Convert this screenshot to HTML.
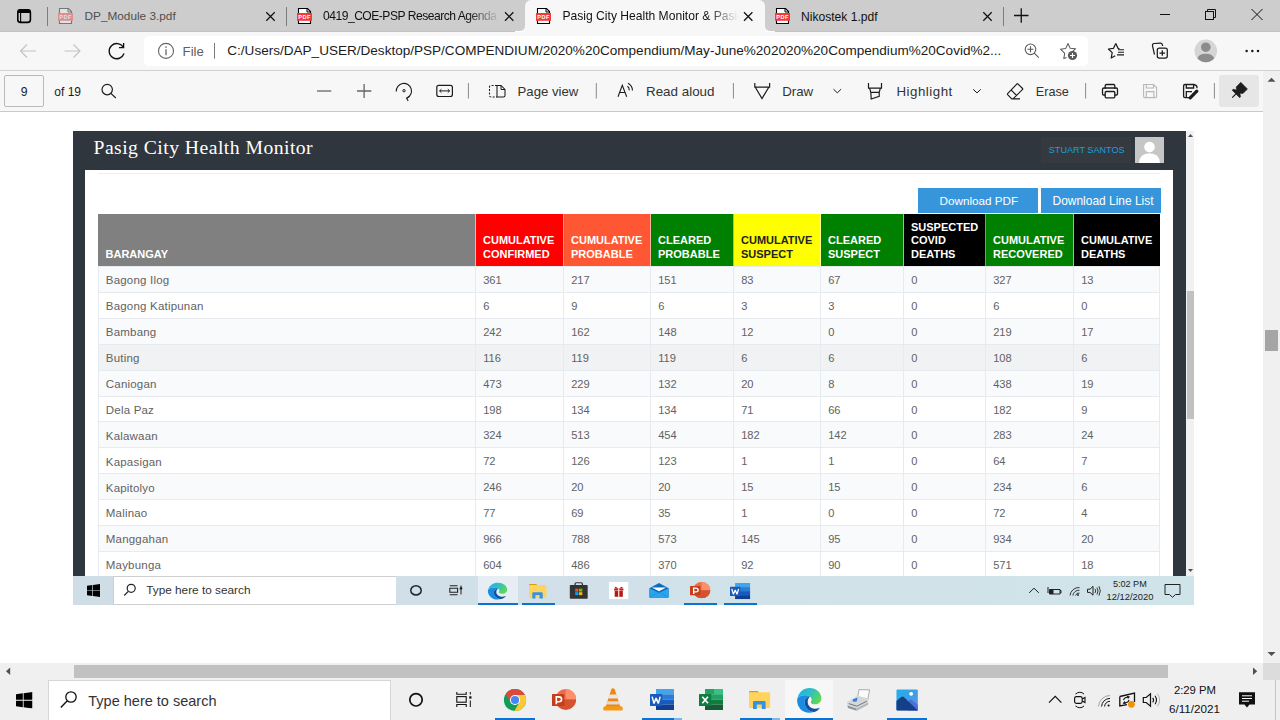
<!DOCTYPE html>
<html><head><meta charset="utf-8">
<style>
*{box-sizing:border-box;margin:0;padding:0}
html,body{width:1280px;height:720px;overflow:hidden;background:#fff;font-family:"Liberation Sans",sans-serif;}
body{position:relative}
.a{position:absolute}
.t{position:absolute;white-space:nowrap;line-height:1}
svg{position:absolute;overflow:visible}
#tabbar{left:0;top:0;width:1280px;height:31px;background:#cdcdcd}
#toolbar{left:0;top:32px;width:1280px;height:39px;background:#f7f7f7;border-bottom:1px solid #d2d2d2}
#pdfbar{left:0;top:71px;width:1263px;height:41px;background:#f7f7f7;border-bottom:1px solid #c9c9c9}
#vscroll{left:1263px;top:71px;width:17px;height:592px;background:#f0f0f0}
#hscroll{left:0;top:663px;width:1263px;height:17px;background:#f0f0f0}
#corner{left:1263px;top:663px;width:17px;height:17px;background:#dcdcdc}
#taskbar{left:0;top:680px;width:1280px;height:40px;background:#efefef}
</style></head><body>
<svg width="0" height="0" style="position:absolute;left:0;top:0">
<defs>
 <linearGradient id="edg1" x1="0" y1="0" x2="1" y2="0.6"><stop offset="0" stop-color="#22aef0"/><stop offset="0.5" stop-color="#2ebfc4"/><stop offset="1" stop-color="#5ed855"/></linearGradient>
 <linearGradient id="edg2" x1="0" y1="0" x2="0.6" y2="1"><stop offset="0" stop-color="#1d84d8"/><stop offset="1" stop-color="#0b4ea2"/></linearGradient>
 <linearGradient id="phg" x1="0" y1="0" x2="1" y2="1"><stop offset="0" stop-color="#24b0ec"/><stop offset="0.5" stop-color="#3aa0e6"/><stop offset="1" stop-color="#7d86e2"/></linearGradient>
 <symbol id="i-edge" viewBox="0 0 24 24">
  <path d="M1.3 10.5C2.5 4.5 7 1 12.3 1C18.5 1 23 5.2 23 10.2C23 13.8 20.3 15.8 17.2 15.8C14.8 15.8 13.5 14.8 13.5 13.8C13.5 13.2 14.2 12.6 14.2 11.5C14.2 9.2 11.9 7.4 8.6 7.4C5 7.4 2 8.8 1.3 10.5Z" fill="url(#edg1)"/>
  <path d="M1.3 10.5C2 8.8 5 7.4 8.6 7.4C10.6 7.4 12 8 12.8 8.6C10 8.8 7.8 11.2 7.8 14.2C7.8 18.6 11.8 22.6 16.4 22.8C15 23.2 13.6 23.4 12 23.4C5.8 23.4 1 18.4 1 12C1 11.5 1.1 11 1.3 10.5Z" fill="#1a8be0"/>
  <path d="M12.8 8.6C10 8.8 7.8 11.2 7.8 14.2C7.8 18.6 11.8 22.6 16.4 22.8C18.8 22.2 20.6 20.5 21.6 18.8C19.5 19.8 17.5 20 15.8 19.6C12.8 18.9 10.6 16.3 10.6 13.6C10.6 11.3 11.6 9.6 12.8 8.6Z" fill="#0c51a6"/>
 </symbol>
 <symbol id="i-explorer" viewBox="0 0 21.3 18">
  <path d="M0 1Q0 0 1 0H8.8L10 1.5L8.8 3H0Z" fill="#dc9c0a"/>
  <rect x="0" y="1.3" width="21.3" height="15.6" rx="0.8" fill="#ffd35e"/>
  <path d="M4 11.3Q4 10 5.3 10H15.3Q16.6 10 16.6 11.3V18H12.8V13.4H7.8V18H4Z" fill="#3592e2"/>
 </symbol>
 <symbol id="i-ppt" viewBox="0 0 24 21">
  <circle cx="13.7" cy="10.4" r="10.4" fill="#ed6c47"/>
  <path d="M13.7 0A10.4 10.4 0 0 1 24.1 10.4H13.7Z" fill="#ff8f6b"/>
  <path d="M3.3 10.4A10.4 10.4 0 0 0 24.1 10.4Z" fill="#d35230"/>
  <rect x="0" y="5" width="12.25" height="12" rx="0.6" fill="#c43e1c"/>
  <path d="M4.3 15.2V7.9H7Q9.6 7.9 9.6 10.3Q9.6 12.7 7 12.7H4.3" fill="none" stroke="#fff" stroke-width="1.6"/>
 </symbol>
 <symbol id="i-word" viewBox="0 0 24 21">
  <rect x="6" y="0" width="18" height="5.3" fill="#41a5ee"/>
  <rect x="6" y="5.3" width="18" height="5.2" fill="#2b7cd3"/>
  <rect x="6" y="10.5" width="18" height="5.2" fill="#185abd"/>
  <rect x="6" y="15.7" width="18" height="5.3" fill="#103f91"/>
  <rect x="0" y="5" width="12.25" height="12" rx="0.6" fill="#185abd"/>
  <path d="M2.1 7.6L4 14.6L6.1 9L8.3 14.6L10.2 7.6" fill="none" stroke="#fff" stroke-width="1.5" stroke-linejoin="bevel"/>
 </symbol>
 <symbol id="i-excel" viewBox="0 0 24 21">
  <rect x="6" y="0" width="18" height="5.3" fill="#21a366"/>
  <rect x="15" y="0" width="9" height="5.3" fill="#33c481"/>
  <rect x="6" y="5.3" width="18" height="5.2" fill="#21a366"/>
  <rect x="6" y="10.5" width="18" height="5.2" fill="#107c41"/>
  <rect x="6" y="15.7" width="18" height="5.3" fill="#185c37"/>
  <rect x="0" y="5" width="12.25" height="12" rx="0.6" fill="#107c41"/>
  <path d="M3.3 7.8L9 14.3M9 7.8L3.3 14.3" fill="none" stroke="#fff" stroke-width="1.7"/>
 </symbol>
 <symbol id="i-chrome" viewBox="0 0 24 24">
  <circle cx="12" cy="12" r="11.1" fill="#109d59"/>
  <path d="M7.67 14.50L2.71 5.92A11.1 11.1 0 0 1 21.91 7.00L12.00 7.00L12 12Z" fill="#dc4a3c"/>
  <path d="M12.00 7.00L21.91 7.00A11.1 11.1 0 0 1 11.37 23.08L16.33 14.50L12 12Z" fill="#fcc934"/>
  <circle cx="12" cy="12" r="5.1" fill="#fff"/>
  <circle cx="12" cy="12" r="4.1" fill="#4787f3"/>
 </symbol>
 <symbol id="i-vlc" viewBox="0 0 20 23">
  <path d="M8.4 1Q10 -0.3 11.6 1L17.4 19H2.6Z" fill="#f08712"/>
  <path d="M6.5 6.6H13.5L14.8 10.6H5.2Z" fill="#e8e8e8"/>
  <path d="M4.3 13.3H15.7L16.7 16.6H3.3Z" fill="#dcdcdc"/>
  <path d="M0.3 20Q0.3 18.3 2 18.3H18Q19.7 18.3 19.7 20V21.3Q19.7 22.6 18.4 22.6H1.6Q0.3 22.6 0.3 21.3Z" fill="#f49a14"/>
 </symbol>
 <symbol id="i-photos" viewBox="0 0 24 24">
  <rect x="0.5" y="0.5" width="23" height="23" rx="1.2" fill="url(#phg)"/>
  <path d="M11 15.5L15.8 11.2L23.5 17.2V23.5H13Z" fill="#4d6fd6"/>
  <path d="M0.5 13.2L5.6 8.7Q7 7.6 8.4 8.7L23.5 23.5H1.7Q0.5 23.5 0.5 22.3Z" fill="#153f86"/>
  <circle cx="16.3" cy="5.3" r="2.1" fill="#fff"/>
 </symbol>
 <symbol id="i-fax" viewBox="0 0 24 22">
  <path d="M13 0.6L23.6 0.9L21.6 11.5L11.2 11Z" fill="#fbfbfb" stroke="#8c8c8c" stroke-width="0.7"/>
  <path d="M1 13.2L11.5 6.8L21.8 9.2L22.2 13.2L10.4 19.6L1.4 16.6Z" fill="#d3d7db"/>
  <path d="M1.4 16.6L10.4 19.6L10.8 21.8L2 18.9Z" fill="#8d9399"/>
  <path d="M10.4 19.6L22.2 13.2L22.2 15.8L10.8 21.8Z" fill="#b3b8be"/>
  <path d="M6.5 10.6L11.6 8.6L10.6 12.4L7.2 12.8Z" fill="#2f7fd8"/>
  <path d="M2.8 14.6L10.8 17.2L20.8 12.2" fill="none" stroke="#737980" stroke-width="1"/>
 </symbol>
 <symbol id="i-store" viewBox="0 0 24 24">
  <path d="M7.5 4V2.6Q7.5 1 9 1H15Q16.5 1 16.5 2.6V4" fill="none" stroke="#333" stroke-width="1.6"/>
  <rect x="1" y="4.2" width="22" height="18.8" rx="1" fill="#333"/>
  <rect x="7.6" y="9.2" width="4" height="4" fill="#f25022"/><rect x="12.4" y="9.2" width="4" height="4" fill="#7fba00"/>
  <rect x="7.6" y="14" width="4" height="4" fill="#00a4ef"/><rect x="12.4" y="14" width="4" height="4" fill="#ffb900"/>
 </symbol>
 <symbol id="i-gift" viewBox="0 0 24 24">
  <rect x="0" y="0" width="24" height="24" fill="#fff"/>
  <rect x="6.3" y="9" width="11.4" height="3" fill="#c21b1b"/>
  <rect x="7" y="12.6" width="10" height="8" fill="#b51616"/>
  <path d="M11.2 9Q8 5 7 7.3Q7 9 11.2 9ZM12.8 9Q16 5 17 7.3Q17 9 12.8 9Z" fill="#c21b1b"/>
  <rect x="11.3" y="9" width="1.4" height="11.6" fill="#fff"/>
 </symbol>
 <symbol id="i-mail" viewBox="0 0 24 24">
  <path d="M0.5 9L12 1.5L23.5 9V21.5Q23.5 23 22 23H2Q0.5 23 0.5 21.5Z" fill="#0f6cbd"/>
  <path d="M3.5 8H20.5L12 13.5Z" fill="#fff"/>
  <path d="M0.5 9L12 16L23.5 9V21.5Q23.5 23 22 23H2Q0.5 23 0.5 21.5Z" fill="#2aa4ea"/>
  <path d="M0.5 22L12 15L23.5 22" fill="none" stroke="#1b8fd8" stroke-width="0.8"/>
 </symbol>
 <symbol id="i-win" viewBox="0 0 16 16">
  <path d="M0 2.2L6.6 1.3V7.6H0ZM7.4 1.2L16 0V7.6H7.4ZM0 8.4H6.6V14.7L0 13.8ZM7.4 8.4H16V16L7.4 14.8Z" fill="#000"/>
 </symbol>
</defs>
</svg>
<div id="tabbar" class="a"></div>
<div class="a" style="left:0;top:31px;width:515px;height:1px;background:#c2c2c2"></div><div class="a" style="left:775px;top:31px;width:505px;height:1px;background:#c2c2c2"></div>
<!-- active tab -->
<div class="a" style="left:521px;top:0;width:248px;height:31px;background:#cdcdcd"></div>
<div class="a" style="left:525px;top:0;width:240px;height:32px;background:#f7f7f7;border-radius:6px 6px 0 0"></div>
<div class="a" style="left:517px;top:23px;width:8px;height:8px;background:#f7f7f7"></div>
<div class="a" style="left:513px;top:19px;width:12px;height:12px;background:#cdcdcd;border-radius:0 0 5px 0"></div>
<div class="a" style="left:765px;top:23px;width:8px;height:8px;background:#f7f7f7"></div>
<div class="a" style="left:765px;top:19px;width:12px;height:12px;background:#cdcdcd;border-radius:0 0 0 5px"></div>
<svg width="1280" height="31" style="left:0;top:0">
 <defs>
  <g id="pdfi">
   <path d="M1.5 0.5H10.5L13.5 3.5V15.5H1.5Z" fill="#fff" stroke="#000" stroke-width="1.1"/>
   <path d="M10 0.8V4H13.2" fill="none" stroke="#000" stroke-width="1"/>
   <rect x="0" y="5" width="15" height="7.8" fill="#f33a3a"/>
   <text x="7.5" y="11.2" font-family="Liberation Sans" font-weight="bold" font-size="5.6" fill="#fff" text-anchor="middle" letter-spacing="0.5">PDF</text>
  </g>
  <g id="xcl"><path d="M0 0L8.4 8.4M8.4 0L0 8.4" stroke="#111" stroke-width="1.25" fill="none"/></g>
 </defs>
 <!-- tab actions -->
 <rect x="17.8" y="9.8" width="12.6" height="12.6" rx="2.6" fill="none" stroke="#000" stroke-width="1.6"/>
 <rect x="17.8" y="9.8" width="12.6" height="3.2" rx="1.2" fill="#000"/>
 <path d="M20.6 12.5V22" stroke="#000" stroke-width="1.1"/>
 <path d="M47.5 7V26" stroke="#7c7c7c" stroke-width="1"/>
 <use href="#pdfi" x="58" y="8" opacity="0.42"/>
 <use href="#xcl" x="266.3" y="12.3"/>
 <path d="M286.5 7V26" stroke="#7c7c7c" stroke-width="1"/>
 <use href="#pdfi" x="297" y="8"/>
 <use href="#xcl" x="505" y="12.3"/>
 <use href="#pdfi" x="536" y="8"/>
 <use href="#xcl" x="744" y="12.3"/>
 <use href="#pdfi" x="775" y="8"/>
 <use href="#xcl" x="983.3" y="12.3"/>
 <path d="M1003.5 7V26" stroke="#7c7c7c" stroke-width="1"/>
 <path d="M1014 15.5H1028.5M1021.25 8.3V22.8" stroke="#111" stroke-width="1.3"/>
 <path d="M1160 14.5H1170" stroke="#111" stroke-width="1"/>
 <rect x="1205.5" y="11.5" width="8" height="8" fill="none" stroke="#111" stroke-width="1"/>
 <path d="M1207.5 11.5V9.5H1215.5V17.5H1213.5" fill="none" stroke="#111" stroke-width="1"/>
 <path d="M1251.5 9L1262.5 20M1262.5 9L1251.5 20" stroke="#111" stroke-width="1"/>
</svg>
<div class="t" style="left:84.5px;top:10.6px;font-size:11.8px;color:#4f4f4f">DP_Module 3.pdf</div>
<div class="t" style="left:323px;top:8.1px;line-height:16px;font-size:12.1px;letter-spacing:-0.5px;color:#111;width:177px;overflow:hidden;-webkit-mask-image:linear-gradient(90deg,#000 82%,transparent 100%)">0419_COE-PSP Research Agenda 2021</div>
<div class="t" style="left:562.5px;top:8.1px;line-height:16px;font-size:12.1px;color:#111;width:176px;overflow:hidden;-webkit-mask-image:linear-gradient(90deg,#000 82%,transparent 100%)">Pasig City Health Monitor &amp; Pasig City</div>
<div class="t" style="left:801px;top:10.6px;font-size:12.1px;color:#111">Nikostek 1.pdf</div>
<div id="toolbar" class="a"></div>
<div class="a" style="left:144px;top:36px;width:944px;height:30px;background:#fff;border-radius:5px"></div>
<svg width="1280" height="40" style="left:0;top:31px">
 <g transform="translate(0,-31)">
 <path d="M20.5 51H36M27 44.5L20.5 51L27 57.5" fill="none" stroke="#c4c4c4" stroke-width="1.2"/>
 <path d="M80 51H64.5M73.5 44.5L80 51L73.5 57.5" fill="none" stroke="#c4c4c4" stroke-width="1.2"/>
 <path d="M123.3 47.2A7.6 7.6 0 1 0 124 53.5" fill="none" stroke="#111" stroke-width="1.35"/>
 <path d="M123.6 43V47.6H119" fill="none" stroke="#111" stroke-width="1.35"/>
 <circle cx="166" cy="50.9" r="7.5" fill="none" stroke="#666" stroke-width="1.1"/>
 <path d="M166 49.3V55.2" stroke="#666" stroke-width="1.3"/><circle cx="166" cy="47" r="0.85" fill="#666"/>
 <path d="M214.5 43V58.7" stroke="#7a7a7a" stroke-width="1"/>
 <circle cx="1030.5" cy="49.3" r="5.3" fill="none" stroke="#5a5a5a" stroke-width="1.1"/>
 <path d="M1027.5 49.3H1033.5M1030.5 46.3V52.3M1034.3 53.1L1038.8 57.7" stroke="#5a5a5a" stroke-width="1.1"/>
 <path d="M1068 43.5L1070.2 48.3L1075.5 48.8L1071.5 52.3" fill="none" stroke="#5a5a5a" stroke-width="1.05" stroke-linejoin="round"/>
 <path d="M1066.5 57.5L1063.8 58.5L1064.7 53.3L1060.5 49.2L1065.8 48.4L1068 43.5" fill="none" stroke="#5a5a5a" stroke-width="1.05" stroke-linejoin="round"/>
 <circle cx="1072.5" cy="55.5" r="4.6" fill="#5a5a5a"/>
 <path d="M1072.5 53V58M1070 55.5H1075" stroke="#fff" stroke-width="1.1"/>
 <path d="M1116 43.5L1118.3 48.4L1123.5 49L1119.6 52.5L1120.6 57.7" fill="none" stroke="#1a1a1a" stroke-width="0"/>
 <path d="M1115.8 43.4L1113.5 48.3L1108.4 49L1112.2 52.6L1111.2 58L1115.2 55.8" fill="none" stroke="#1a1a1a" stroke-width="1.2" stroke-linejoin="round"/>
 <path d="M1115.8 43.4L1118 48.3L1119.5 48.5" fill="none" stroke="#1a1a1a" stroke-width="1.2" stroke-linejoin="round"/>
 <path d="M1118 49.7H1124M1118 52.3H1124M1117 54.9H1124" stroke="#1a1a1a" stroke-width="1.1"/>
 <path d="M1154.5 54.5L1152.5 45.8Q1152.2 43.8 1154.2 43.5L1160.2 43.1Q1162 43 1162.4 44.8L1162.6 46" fill="none" stroke="#1a1a1a" stroke-width="1.2"/>
 <rect x="1157.3" y="48" width="10" height="10" rx="2" fill="#f7f7f7" stroke="#1a1a1a" stroke-width="1.25"/>
 <path d="M1162.3 50.2V55.8M1159.5 53H1165.1" stroke="#1a1a1a" stroke-width="1.25"/>
 <circle cx="1205.8" cy="50.9" r="11.3" fill="#d5d5d5"/>
 <circle cx="1205.8" cy="47.2" r="4.8" fill="#8c8c8c"/>
 <path d="M1197.5 58.5Q1198.5 53.8 1205.8 53.8Q1213 53.8 1214.2 58.5A11.3 11.3 0 0 1 1197.5 58.5Z" fill="#8c8c8c"/>
 <circle cx="1246.6" cy="50.9" r="1.25" fill="#1a1a1a"/><circle cx="1252.3" cy="50.9" r="1.25" fill="#1a1a1a"/><circle cx="1258" cy="50.9" r="1.25" fill="#1a1a1a"/>
 </g>
</svg>
<div class="t" style="left:182.6px;top:44.5px;font-size:13.2px;color:#5f5f5f">File</div>
<div class="t" style="left:227.3px;top:44.4px;font-size:13.55px;color:#1c1c1c">C:/Users/DAP_USER/Desktop/PSP/COMPENDIUM/2020%20Compendium/May-June%202020%20Compendium%20Covid%2...</div>

<div id="pdfbar" class="a"></div>
<div class="a" style="left:4px;top:75px;width:40px;height:32px;border:1px solid #b9b9b9;border-radius:2px;background:#f7f7f7"></div>
<div class="a" style="left:1219px;top:75px;width:40px;height:32px;background:#e6e6e6;border-radius:3px"></div>
<svg width="1263" height="40" style="left:0;top:71px">
 <g transform="translate(0,-71)" fill="none" stroke="#1c1c1c" stroke-width="1.2">
 <circle cx="107.2" cy="89.6" r="5.2"/><path d="M110.9 93.4L115.8 98"/>
 <path d="M317 91H331.3" stroke="#666" stroke-width="1.3"/>
 <path d="M357 91H371.3M364.1 84V98" stroke="#666" stroke-width="1.3"/>
 <path d="M396.3 91.5A7.6 7.6 0 1 1 406.8 98" stroke-width="1.1"/>
 <path d="M409.8 96.3L406.6 98.2L408.2 101" stroke-width="1.1"/>
 <circle cx="404" cy="90.7" r="1.2" stroke-width="1"/>
 <rect x="436.8" y="85.3" width="15.6" height="11.2" rx="2" stroke-width="1.2"/>
 <path d="M439.6 90.9H449.6M441.4 89.2L439.6 90.9L441.4 92.6M447.8 89.2L449.6 90.9L447.8 92.6" stroke-width="1"/>
 <path d="M468.4 83V98.5" stroke="#8a8a8a" stroke-width="1"/>
 <path d="M497 85.5H491Q489.5 85.5 489.5 87V95.5Q489.5 97 491 97H497" stroke-dasharray="2 1.4" stroke-width="1.05"/>
 <path d="M497 85.5H501L505 89.5V95.5Q505 97 503.5 97H497Z" stroke-width="1.05"/>
 <path d="M501 85.5V89.5H505" stroke-width="1"/>
 <path d="M596.3 83V98.5" stroke="#8a8a8a" stroke-width="1"/>
 <path d="M618 96.8L622.3 85.2L626.7 96.8M619.6 92.5H625" stroke-width="1.1"/>
 <path d="M627.5 86.3Q629.5 87.8 629.2 90.4M628 83.2Q632.4 85.5 632.5 90.6" stroke-width="1.1"/>
 <path d="M733.4 83V98.5" stroke="#8a8a8a" stroke-width="1"/>
 <path d="M754.8 83V87.2H769.6V83M755.3 87.2L762 98.5L768.8 87.2" stroke-width="1.2"/>
 <path d="M833.5 89.2L837.3 92.8L841.1 89.2" stroke-width="1"/>
 <path d="M868.5 83V88.2H881.5V83M869.6 88.2L870.8 92.3H879.2L880.4 88.2M870.8 92.3L871.2 99L879.2 96.3V92.3" stroke-width="1.2"/>
 <path d="M973.2 89.3L977 92.9L980.8 89.3" stroke-width="1"/>
 <path d="M1007.6 93.6L1017 83.8Q1017.4 83.4 1017.8 83.8L1022.6 88.5Q1023 89 1022.6 89.4L1013 99H1011.8L1007.6 94.6Q1007.2 94.1 1007.6 93.6ZM1011 89.9L1016.6 95.5M1012.2 98.9H1020" stroke-width="1.15"/>
 <path d="M1085.6 83V98.5" stroke="#8a8a8a" stroke-width="1"/>
 <path d="M1105.2 89V85.8Q1105.2 84.5 1106.5 84.5H1113.6Q1114.8 84.5 1114.8 85.8V89M1105.2 95H1103.6Q1102.5 95 1102.5 93.8V89.2Q1102.5 88 1104 88H1116.2Q1117.5 88 1117.5 89.4V93.8Q1117.5 95 1116.4 95H1114.8" stroke-width="1.3"/>
 <rect x="1105.2" y="91.5" width="9.6" height="6.3" rx="1" stroke-width="1.3"/>
 <path d="M1143.6 84.5H1153.5L1156.6 87.6V96.3Q1156.6 97.6 1155.3 97.6H1144.9Q1143.6 97.6 1143.6 96.3ZM1146.3 84.5V88H1153.5V84.5M1146.3 97.6V91.6H1153.9V97.6" stroke="#b8b8b8" stroke-width="1.1"/>
 <path d="M1189.5 97.6H1185Q1183.6 97.6 1183.6 96.3V85.8Q1183.6 84.5 1185 84.5H1194Q1197.3 85.3 1197 88.2M1186.3 84.5V88H1193.6V84.5M1186.3 97.6V91.6H1192" stroke-width="1.3"/>
 <path d="M1190.2 97.8L1196.8 91.2" stroke-width="3.2" stroke-linecap="round"/>
 <path d="M1214.4 83V98.5" stroke="#8a8a8a" stroke-width="1"/>
 </g>
 <g transform="translate(0,-71)">
 <path d="M1232.15 90.15 L1233.07 89.23 L1236.47 89.94 L1236.25 86.90 L1240.78 82.37 L1247.43 89.02 L1242.90 93.55 L1239.86 93.33 L1240.57 96.73 L1239.65 97.65Z" fill="#1e1e1e" stroke="#1e1e1e" stroke-width="0.6" stroke-linejoin="round"/>
 <path d="M1236.04 93.76L1232.22 97.58" stroke="#1e1e1e" stroke-width="1.1"/>
 </g>
</svg>
<div class="t" style="left:20.8px;top:85.8px;font-size:12.2px;color:#1c1c1c">9</div>
<div class="t" style="left:54.3px;top:85.7px;font-size:12px;color:#1c1c1c">of 19</div>
<div class="t" style="left:517.5px;top:84.5px;font-size:13.2px;color:#333">Page view</div>
<div class="t" style="left:646px;top:84.5px;font-size:13.4px;color:#333">Read aloud</div>
<div class="t" style="left:782.2px;top:84.7px;font-size:13.3px;color:#333">Draw</div>
<div class="t" style="left:896.5px;top:84.5px;font-size:13.3px;letter-spacing:0.5px;color:#333">Highlight</div>
<div class="t" style="left:1035.7px;top:85.8px;font-size:12.7px;color:#333">Erase</div>
<div id="vscroll" class="a"></div>
<svg width="17" height="592" style="left:1263px;top:71px"><path d="M4.5 10.8L8.5 6.8L12.5 10.8Z" fill="#505050"/><path d="M4.5 581L8.5 585L12.5 581Z" fill="#505050"/></svg>
<div class="a" style="left:1265px;top:330px;width:13px;height:21px;background:#a5a5a5"></div>
<div id="hscroll" class="a"></div>
<div class="a" style="left:74px;top:665px;width:1094px;height:13px;background:#c1c1c1"></div>
<svg width="1263" height="17" style="left:0;top:663px"><path d="M10.2 4.6L6 8.3L10.2 12Z" fill="#505050"/><path d="M1253 4.6L1257.2 8.3L1253 12Z" fill="#505050"/></svg>
<div id="corner" class="a"></div>
<!-- screenshot -->
<div class="a" style="left:73px;top:131px;width:1113px;height:445px;background:#2f363d"></div>
<div class="a" style="left:1186px;top:131px;width:8px;height:445px;background:#f1f1f1"></div>
<div class="a" style="left:1187px;top:291px;width:7px;height:128px;background:#c1c1c1"></div>
<svg width="8" height="445" style="left:1186px;top:131px"><path d="M2 6L4.5 3L7 6Z" fill="#505050"/><path d="M2 438L4.5 441L7 438Z" fill="#505050"/></svg>
<div class="t" style="left:93.5px;top:137.6px;font-size:19.7px;font-family:'Liberation Serif',serif;color:#fff;letter-spacing:0.45px">Pasig City Health Monitor</div>
<div class="a" style="left:1041px;top:137px;width:90px;height:26px;background:#353a41"></div>
<div class="t" style="left:1048.8px;top:146px;font-size:9.1px;color:#1a9fdc">STUART SANTOS</div>
<div class="a" style="left:1135px;top:137px;width:29px;height:26px;background:#c6c6c6;overflow:hidden">
 <svg width="29" height="25" style="left:0;top:0"><circle cx="14.5" cy="10" r="5.3" fill="#fff"/><path d="M4 26Q4.5 16.5 14.5 16.3Q24.5 16.5 25 26Z" fill="#fff"/></svg>
</div>
<div class="a" style="left:85px;top:170px;width:1088px;height:406px;background:#fff"></div>
<div class="a" style="left:98px;top:173px;width:1062px;height:1px;background:#eeeeee"></div>
<div class="a" style="left:918px;top:188px;width:120px;height:25px;background:#3796db"></div>
<div class="a" style="left:1041px;top:188px;width:120px;height:25px;background:#3796db"></div>
<div class="t" style="left:939.5px;top:195.4px;font-size:11.7px;color:#fff">Download PDF</div>
<div class="t" style="left:1052.6px;top:196.2px;font-size:11.95px;color:#fff">Download Line List</div>
<div class="a" style="left:98px;top:214px;width:378px;height:52px;background:#808080"></div>
<div class="a" style="left:105.5px;top:247.94px;font-size:11px;line-height:13.7px;font-weight:bold;color:#fff;white-space:nowrap">BARANGAY</div>
<div class="a" style="left:476px;top:214px;width:88px;height:52px;background:#ff0000"></div>
<div class="a" style="left:483.0px;top:234.24px;font-size:11px;line-height:13.7px;font-weight:bold;color:#fff;white-space:nowrap">CUMULATIVE<br>CONFIRMED</div>
<div class="a" style="left:564px;top:214px;width:87px;height:52px;background:#ff5733"></div>
<div class="a" style="left:571.0px;top:234.24px;font-size:11px;line-height:13.7px;font-weight:bold;color:#fff;white-space:nowrap">CUMULATIVE<br>PROBABLE</div>
<div class="a" style="left:651px;top:214px;width:83px;height:52px;background:#008000"></div>
<div class="a" style="left:658.0px;top:234.24px;font-size:11px;line-height:13.7px;font-weight:bold;color:#fff;white-space:nowrap">CLEARED<br>PROBABLE</div>
<div class="a" style="left:734px;top:214px;width:87px;height:52px;background:#ffff00"></div>
<div class="a" style="left:741.0px;top:234.24px;font-size:11px;line-height:13.7px;font-weight:bold;color:#222;white-space:nowrap">CUMULATIVE<br>SUSPECT</div>
<div class="a" style="left:821px;top:214px;width:83px;height:52px;background:#008000"></div>
<div class="a" style="left:828.0px;top:234.24px;font-size:11px;line-height:13.7px;font-weight:bold;color:#fff;white-space:nowrap">CLEARED<br>SUSPECT</div>
<div class="a" style="left:904px;top:214px;width:82px;height:52px;background:#000000"></div>
<div class="a" style="left:911.0px;top:220.54px;font-size:11px;line-height:13.7px;font-weight:bold;color:#fff;white-space:nowrap">SUSPECTED<br>COVID<br>DEATHS</div>
<div class="a" style="left:986px;top:214px;width:88px;height:52px;background:#008000"></div>
<div class="a" style="left:993.0px;top:234.24px;font-size:11px;line-height:13.7px;font-weight:bold;color:#fff;white-space:nowrap">CUMULATIVE<br>RECOVERED</div>
<div class="a" style="left:1074px;top:214px;width:86px;height:52px;background:#000000"></div>
<div class="a" style="left:1081.0px;top:234.24px;font-size:11px;line-height:13.7px;font-weight:bold;color:#fff;white-space:nowrap">CUMULATIVE<br>DEATHS</div>
<div class="a" style="left:475px;top:214px;width:1px;height:52px;background:rgba(255,255,255,0.55)"></div>
<div class="a" style="left:563px;top:214px;width:1px;height:52px;background:rgba(255,255,255,0.55)"></div>
<div class="a" style="left:650px;top:214px;width:1px;height:52px;background:rgba(255,255,255,0.55)"></div>
<div class="a" style="left:733px;top:214px;width:1px;height:52px;background:rgba(255,255,255,0.55)"></div>
<div class="a" style="left:820px;top:214px;width:1px;height:52px;background:rgba(255,255,255,0.55)"></div>
<div class="a" style="left:903px;top:214px;width:1px;height:52px;background:rgba(255,255,255,0.55)"></div>
<div class="a" style="left:985px;top:214px;width:1px;height:52px;background:rgba(255,255,255,0.55)"></div>
<div class="a" style="left:1073px;top:214px;width:1px;height:52px;background:rgba(255,255,255,0.55)"></div>
<div class="a" style="left:98px;top:266.0px;width:1062px;height:26px;background:#f9fafc;border-top:1px solid #e7eaee"></div>
<div class="t" style="left:105.8px;top:275.37px;font-size:11.5px;letter-spacing:0.2px;color:#626262">Bagong Ilog</div>
<div class="t" style="left:483.2px;top:275.00px;font-size:11.1px;color:#626262">361</div>
<div class="t" style="left:571.2px;top:275.00px;font-size:11.1px;color:#626262">217</div>
<div class="t" style="left:658.2px;top:275.00px;font-size:11.1px;color:#626262">151</div>
<div class="t" style="left:741.2px;top:275.00px;font-size:11.1px;color:#626262">83</div>
<div class="t" style="left:828.2px;top:275.00px;font-size:11.1px;color:#626262">67</div>
<div class="t" style="left:911.2px;top:275.00px;font-size:11.1px;color:#626262">0</div>
<div class="t" style="left:993.2px;top:275.00px;font-size:11.1px;color:#626262">327</div>
<div class="t" style="left:1081.2px;top:275.00px;font-size:11.1px;color:#626262">13</div>
<div class="a" style="left:98px;top:291.9px;width:1062px;height:26px;background:#ffffff;border-top:1px solid #e7eaee"></div>
<div class="t" style="left:105.8px;top:301.27px;font-size:11.5px;letter-spacing:0.2px;color:#626262">Bagong Katipunan</div>
<div class="t" style="left:483.2px;top:300.90px;font-size:11.1px;color:#626262">6</div>
<div class="t" style="left:571.2px;top:300.90px;font-size:11.1px;color:#626262">9</div>
<div class="t" style="left:658.2px;top:300.90px;font-size:11.1px;color:#626262">6</div>
<div class="t" style="left:741.2px;top:300.90px;font-size:11.1px;color:#626262">3</div>
<div class="t" style="left:828.2px;top:300.90px;font-size:11.1px;color:#626262">3</div>
<div class="t" style="left:911.2px;top:300.90px;font-size:11.1px;color:#626262">0</div>
<div class="t" style="left:993.2px;top:300.90px;font-size:11.1px;color:#626262">6</div>
<div class="t" style="left:1081.2px;top:300.90px;font-size:11.1px;color:#626262">0</div>
<div class="a" style="left:98px;top:317.8px;width:1062px;height:26px;background:#f9fafc;border-top:1px solid #e7eaee"></div>
<div class="t" style="left:105.8px;top:327.17px;font-size:11.5px;letter-spacing:0.2px;color:#626262">Bambang</div>
<div class="t" style="left:483.2px;top:326.80px;font-size:11.1px;color:#626262">242</div>
<div class="t" style="left:571.2px;top:326.80px;font-size:11.1px;color:#626262">162</div>
<div class="t" style="left:658.2px;top:326.80px;font-size:11.1px;color:#626262">148</div>
<div class="t" style="left:741.2px;top:326.80px;font-size:11.1px;color:#626262">12</div>
<div class="t" style="left:828.2px;top:326.80px;font-size:11.1px;color:#626262">0</div>
<div class="t" style="left:911.2px;top:326.80px;font-size:11.1px;color:#626262">0</div>
<div class="t" style="left:993.2px;top:326.80px;font-size:11.1px;color:#626262">219</div>
<div class="t" style="left:1081.2px;top:326.80px;font-size:11.1px;color:#626262">17</div>
<div class="a" style="left:98px;top:343.7px;width:1062px;height:26px;background:#f1f2f3;border-top:1px solid #e7eaee"></div>
<div class="t" style="left:105.8px;top:353.07px;font-size:11.5px;letter-spacing:0.2px;color:#626262">Buting</div>
<div class="t" style="left:483.2px;top:352.70px;font-size:11.1px;color:#626262">116</div>
<div class="t" style="left:571.2px;top:352.70px;font-size:11.1px;color:#626262">119</div>
<div class="t" style="left:658.2px;top:352.70px;font-size:11.1px;color:#626262">119</div>
<div class="t" style="left:741.2px;top:352.70px;font-size:11.1px;color:#626262">6</div>
<div class="t" style="left:828.2px;top:352.70px;font-size:11.1px;color:#626262">6</div>
<div class="t" style="left:911.2px;top:352.70px;font-size:11.1px;color:#626262">0</div>
<div class="t" style="left:993.2px;top:352.70px;font-size:11.1px;color:#626262">108</div>
<div class="t" style="left:1081.2px;top:352.70px;font-size:11.1px;color:#626262">6</div>
<div class="a" style="left:98px;top:369.6px;width:1062px;height:26px;background:#f9fafc;border-top:1px solid #e7eaee"></div>
<div class="t" style="left:105.8px;top:378.97px;font-size:11.5px;letter-spacing:0.2px;color:#626262">Caniogan</div>
<div class="t" style="left:483.2px;top:378.60px;font-size:11.1px;color:#626262">473</div>
<div class="t" style="left:571.2px;top:378.60px;font-size:11.1px;color:#626262">229</div>
<div class="t" style="left:658.2px;top:378.60px;font-size:11.1px;color:#626262">132</div>
<div class="t" style="left:741.2px;top:378.60px;font-size:11.1px;color:#626262">20</div>
<div class="t" style="left:828.2px;top:378.60px;font-size:11.1px;color:#626262">8</div>
<div class="t" style="left:911.2px;top:378.60px;font-size:11.1px;color:#626262">0</div>
<div class="t" style="left:993.2px;top:378.60px;font-size:11.1px;color:#626262">438</div>
<div class="t" style="left:1081.2px;top:378.60px;font-size:11.1px;color:#626262">19</div>
<div class="a" style="left:98px;top:395.5px;width:1062px;height:26px;background:#ffffff;border-top:1px solid #e7eaee"></div>
<div class="t" style="left:105.8px;top:404.87px;font-size:11.5px;letter-spacing:0.2px;color:#626262">Dela Paz</div>
<div class="t" style="left:483.2px;top:404.50px;font-size:11.1px;color:#626262">198</div>
<div class="t" style="left:571.2px;top:404.50px;font-size:11.1px;color:#626262">134</div>
<div class="t" style="left:658.2px;top:404.50px;font-size:11.1px;color:#626262">134</div>
<div class="t" style="left:741.2px;top:404.50px;font-size:11.1px;color:#626262">71</div>
<div class="t" style="left:828.2px;top:404.50px;font-size:11.1px;color:#626262">66</div>
<div class="t" style="left:911.2px;top:404.50px;font-size:11.1px;color:#626262">0</div>
<div class="t" style="left:993.2px;top:404.50px;font-size:11.1px;color:#626262">182</div>
<div class="t" style="left:1081.2px;top:404.50px;font-size:11.1px;color:#626262">9</div>
<div class="a" style="left:98px;top:421.4px;width:1062px;height:26px;background:#f9fafc;border-top:1px solid #e7eaee"></div>
<div class="t" style="left:105.8px;top:430.77px;font-size:11.5px;letter-spacing:0.2px;color:#626262">Kalawaan</div>
<div class="t" style="left:483.2px;top:430.40px;font-size:11.1px;color:#626262">324</div>
<div class="t" style="left:571.2px;top:430.40px;font-size:11.1px;color:#626262">513</div>
<div class="t" style="left:658.2px;top:430.40px;font-size:11.1px;color:#626262">454</div>
<div class="t" style="left:741.2px;top:430.40px;font-size:11.1px;color:#626262">182</div>
<div class="t" style="left:828.2px;top:430.40px;font-size:11.1px;color:#626262">142</div>
<div class="t" style="left:911.2px;top:430.40px;font-size:11.1px;color:#626262">0</div>
<div class="t" style="left:993.2px;top:430.40px;font-size:11.1px;color:#626262">283</div>
<div class="t" style="left:1081.2px;top:430.40px;font-size:11.1px;color:#626262">24</div>
<div class="a" style="left:98px;top:447.3px;width:1062px;height:26px;background:#ffffff;border-top:1px solid #e7eaee"></div>
<div class="t" style="left:105.8px;top:456.67px;font-size:11.5px;letter-spacing:0.2px;color:#626262">Kapasigan</div>
<div class="t" style="left:483.2px;top:456.30px;font-size:11.1px;color:#626262">72</div>
<div class="t" style="left:571.2px;top:456.30px;font-size:11.1px;color:#626262">126</div>
<div class="t" style="left:658.2px;top:456.30px;font-size:11.1px;color:#626262">123</div>
<div class="t" style="left:741.2px;top:456.30px;font-size:11.1px;color:#626262">1</div>
<div class="t" style="left:828.2px;top:456.30px;font-size:11.1px;color:#626262">1</div>
<div class="t" style="left:911.2px;top:456.30px;font-size:11.1px;color:#626262">0</div>
<div class="t" style="left:993.2px;top:456.30px;font-size:11.1px;color:#626262">64</div>
<div class="t" style="left:1081.2px;top:456.30px;font-size:11.1px;color:#626262">7</div>
<div class="a" style="left:98px;top:473.2px;width:1062px;height:26px;background:#f9fafc;border-top:1px solid #e7eaee"></div>
<div class="t" style="left:105.8px;top:482.57px;font-size:11.5px;letter-spacing:0.2px;color:#626262">Kapitolyo</div>
<div class="t" style="left:483.2px;top:482.20px;font-size:11.1px;color:#626262">246</div>
<div class="t" style="left:571.2px;top:482.20px;font-size:11.1px;color:#626262">20</div>
<div class="t" style="left:658.2px;top:482.20px;font-size:11.1px;color:#626262">20</div>
<div class="t" style="left:741.2px;top:482.20px;font-size:11.1px;color:#626262">15</div>
<div class="t" style="left:828.2px;top:482.20px;font-size:11.1px;color:#626262">15</div>
<div class="t" style="left:911.2px;top:482.20px;font-size:11.1px;color:#626262">0</div>
<div class="t" style="left:993.2px;top:482.20px;font-size:11.1px;color:#626262">234</div>
<div class="t" style="left:1081.2px;top:482.20px;font-size:11.1px;color:#626262">6</div>
<div class="a" style="left:98px;top:499.1px;width:1062px;height:26px;background:#ffffff;border-top:1px solid #e7eaee"></div>
<div class="t" style="left:105.8px;top:508.47px;font-size:11.5px;letter-spacing:0.2px;color:#626262">Malinao</div>
<div class="t" style="left:483.2px;top:508.10px;font-size:11.1px;color:#626262">77</div>
<div class="t" style="left:571.2px;top:508.10px;font-size:11.1px;color:#626262">69</div>
<div class="t" style="left:658.2px;top:508.10px;font-size:11.1px;color:#626262">35</div>
<div class="t" style="left:741.2px;top:508.10px;font-size:11.1px;color:#626262">1</div>
<div class="t" style="left:828.2px;top:508.10px;font-size:11.1px;color:#626262">0</div>
<div class="t" style="left:911.2px;top:508.10px;font-size:11.1px;color:#626262">0</div>
<div class="t" style="left:993.2px;top:508.10px;font-size:11.1px;color:#626262">72</div>
<div class="t" style="left:1081.2px;top:508.10px;font-size:11.1px;color:#626262">4</div>
<div class="a" style="left:98px;top:525.0px;width:1062px;height:26px;background:#f9fafc;border-top:1px solid #e7eaee"></div>
<div class="t" style="left:105.8px;top:534.37px;font-size:11.5px;letter-spacing:0.2px;color:#626262">Manggahan</div>
<div class="t" style="left:483.2px;top:534.00px;font-size:11.1px;color:#626262">966</div>
<div class="t" style="left:571.2px;top:534.00px;font-size:11.1px;color:#626262">788</div>
<div class="t" style="left:658.2px;top:534.00px;font-size:11.1px;color:#626262">573</div>
<div class="t" style="left:741.2px;top:534.00px;font-size:11.1px;color:#626262">145</div>
<div class="t" style="left:828.2px;top:534.00px;font-size:11.1px;color:#626262">95</div>
<div class="t" style="left:911.2px;top:534.00px;font-size:11.1px;color:#626262">0</div>
<div class="t" style="left:993.2px;top:534.00px;font-size:11.1px;color:#626262">934</div>
<div class="t" style="left:1081.2px;top:534.00px;font-size:11.1px;color:#626262">20</div>
<div class="a" style="left:98px;top:550.9px;width:1062px;height:26px;background:#ffffff;border-top:1px solid #e7eaee"></div>
<div class="t" style="left:105.8px;top:560.27px;font-size:11.5px;letter-spacing:0.2px;color:#626262">Maybunga</div>
<div class="t" style="left:483.2px;top:559.90px;font-size:11.1px;color:#626262">604</div>
<div class="t" style="left:571.2px;top:559.90px;font-size:11.1px;color:#626262">486</div>
<div class="t" style="left:658.2px;top:559.90px;font-size:11.1px;color:#626262">370</div>
<div class="t" style="left:741.2px;top:559.90px;font-size:11.1px;color:#626262">92</div>
<div class="t" style="left:828.2px;top:559.90px;font-size:11.1px;color:#626262">90</div>
<div class="t" style="left:911.2px;top:559.90px;font-size:11.1px;color:#626262">0</div>
<div class="t" style="left:993.2px;top:559.90px;font-size:11.1px;color:#626262">571</div>
<div class="t" style="left:1081.2px;top:559.90px;font-size:11.1px;color:#626262">18</div>
<div class="a" style="left:98px;top:266px;width:1px;height:312px;background:#e7eaee"></div>
<div class="a" style="left:475px;top:266px;width:1px;height:312px;background:#e7eaee"></div>
<div class="a" style="left:563px;top:266px;width:1px;height:312px;background:#e7eaee"></div>
<div class="a" style="left:650px;top:266px;width:1px;height:312px;background:#e7eaee"></div>
<div class="a" style="left:733px;top:266px;width:1px;height:312px;background:#e7eaee"></div>
<div class="a" style="left:820px;top:266px;width:1px;height:312px;background:#e7eaee"></div>
<div class="a" style="left:903px;top:266px;width:1px;height:312px;background:#e7eaee"></div>
<div class="a" style="left:985px;top:266px;width:1px;height:312px;background:#e7eaee"></div>
<div class="a" style="left:1073px;top:266px;width:1px;height:312px;background:#e7eaee"></div>
<div class="a" style="left:1159px;top:266px;width:1px;height:312px;background:#e7eaee"></div>
<div class="a" style="left:73px;top:576px;width:1121px;height:29px;background:linear-gradient(90deg,#cfdde6 0%,#d2e1e9 50%,#cfe4e8 100%)"></div>
<div class="a" style="left:112.5px;top:576px;width:283px;height:29px;background:#fff;border:1px solid #cfcfcf;border-right:none"></div>
<div class="a" style="left:478px;top:576px;width:40px;height:29px;background:#e6eef3"></div>
<div class="a" style="left:478px;top:603px;width:40px;height:2px;background:#0b74d1"></div>
<div class="a" style="left:522px;top:603px;width:33px;height:2px;background:#0b74d1"></div>
<div class="a" style="left:683.5px;top:603px;width:33px;height:2px;background:#0b74d1"></div>
<div class="a" style="left:724px;top:603px;width:33px;height:2px;background:#0b74d1"></div>
<svg width="13" height="13" viewBox="0 0 16 16" style="left:86.5px;top:584px"><use href="#i-win"/></svg>
<svg width="1121" height="29" style="left:73px;top:576px">
 <g transform="translate(-73,-576)" fill="none" stroke="#222" stroke-width="1.2">
  <circle cx="131.2" cy="588.3" r="4"/><path d="M128.3 591.3L124.2 595.5"/>
  <ellipse cx="416" cy="590.4" rx="5.2" ry="4.6" stroke-width="1.5"/>
  <path d="M449.8 585.8H457.6M449.8 594.7H457.6M449.8 588.2H457.6V592.3H449.8Z" stroke-width="1.1"/>
  <path d="M461 585.5V587M461 589.5V594.5" stroke-width="1"/><circle cx="461" cy="588.4" r="0.8" fill="#222"/>
  <path d="M1029.2 592.8L1034 588.2L1038.8 592.8" stroke-width="1"/>
  <path d="M1048 587V593M1049.5 589.5H1060V594H1049.5ZM1060 590.5H1061V593H1060" stroke-width="1"/>
  <rect x="1049.5" y="589.5" width="4" height="4.5" fill="#222" stroke="none"/>
  <path d="M1070 595.5A9 9 0 0 1 1079.5 587.5M1072.8 595.5A6.3 6.3 0 0 1 1079.5 590.2M1075.6 595.5A3.6 3.6 0 0 1 1079.5 593" stroke-width="0.9"/>
  <circle cx="1078" cy="595" r="0.9" fill="#222" stroke="none"/>
  <path d="M1087.5 589.2H1090L1093 586.3V595.2L1090 592.4H1087.5Z" stroke-width="1"/>
  <path d="M1095 588.8Q1096.4 590.9 1095 593M1097 587.5Q1099 590.9 1097 594.5M1099 586.2Q1101.6 590.9 1099 595.6" stroke-width="0.9"/>
  <path d="M1165 584.5H1180V594.5H1175.5L1172.5 597.3L1169.5 594.5H1165Z" stroke-width="1"/>
 </g>
</svg>
<div class="t" style="left:146.2px;top:584.8px;font-size:11.8px;color:#333">Type here to search</div>
<svg width="21" height="18" viewBox="0 0 24 24" preserveAspectRatio="none" style="left:487px;top:581.5px"><use href="#i-edge"/></svg>
<svg width="17.6" height="14.8" viewBox="0 0 21.3 18" preserveAspectRatio="none" style="left:529.4px;top:584px"><use href="#i-explorer"/></svg>
<svg width="19.5" height="17.5" viewBox="0 0 24 24" preserveAspectRatio="none" style="left:568.6px;top:581.8px"><use href="#i-store"/></svg>
<svg width="19.5" height="17.2" viewBox="0 0 24 24" preserveAspectRatio="none" style="left:609.2px;top:581.8px"><use href="#i-gift"/></svg>
<svg width="20" height="16.5" viewBox="0 0 24 24" preserveAspectRatio="none" style="left:649.4px;top:582.4px"><use href="#i-mail"/></svg>
<svg width="20.4" height="16.5" viewBox="0 0 24 21" preserveAspectRatio="none" style="left:689.6px;top:582.2px"><use href="#i-ppt"/></svg>
<svg width="20.3" height="16.2" viewBox="0 0 24 21" preserveAspectRatio="none" style="left:730px;top:582.5px"><use href="#i-word"/></svg>
<div class="t" style="left:1112.9px;top:579.5px;font-size:9.1px;color:#222">5:02 PM</div>
<div class="t" style="left:1106.5px;top:592.2px;font-size:9.4px;color:#222">12/12/2020</div>
<div id="taskbar" class="a"></div>
<div class="a" style="left:48px;top:680px;width:343px;height:40px;background:#fff;border:1px solid #d6d6d6;border-bottom:none"></div>
<div class="a" style="left:785px;top:680px;width:48px;height:40px;background:#f7f7f7"></div>
<div class="a" style="left:495px;top:718px;width:40px;height:2px;background:#0b74d1"></div>
<div class="a" style="left:642px;top:718px;width:32px;height:2px;background:#0b74d1"></div>
<div class="a" style="left:674px;top:718px;width:8px;height:2px;background:#7eb6e6"></div>
<div class="a" style="left:740px;top:718px;width:32px;height:2px;background:#0b74d1"></div>
<div class="a" style="left:772px;top:718px;width:8px;height:2px;background:#7eb6e6"></div>
<div class="a" style="left:785px;top:718px;width:48px;height:2px;background:#0b74d1"></div>
<div class="a" style="left:887px;top:718px;width:40px;height:2px;background:#0b74d1"></div>
<div class="a" style="left:1274.5px;top:680px;width:1px;height:40px;background:#c4c4c4"></div>
<svg width="16.5" height="16.5" viewBox="0 0 16 16" style="left:15.8px;top:691.8px"><use href="#i-win"/></svg>
<svg width="1280" height="40" style="left:0;top:680px">
 <g transform="translate(0,-680)" fill="none" stroke="#111" stroke-width="1.4">
  <circle cx="71" cy="697" r="5.2" stroke-width="1.3"/><path d="M67.3 700.8L60.8 707.5" stroke-width="1.4"/>
  <circle cx="416" cy="699.8" r="6.2" stroke-width="1.7"/>
  <path d="M456.8 692V694.3H466.2V692M456.8 707V704.5H466.2V707" stroke-width="1.1"/>
  <rect x="456.8" y="696.6" width="9.4" height="5.6" stroke-width="1.1"/>
  <path d="M470.3 692V694.5M470.3 700.5V707" stroke-width="1"/><rect x="469.2" y="696.3" width="2.3" height="2.3" fill="#111" stroke="none"/>
  <path d="M1049 702.6L1055.2 696.4L1061.4 702.6" stroke-width="1.2"/>
  <rect x="1074.6" y="696.6" width="7.6" height="6.8" rx="1.8" stroke-width="1.15"/>
  <path d="M1082.2 699L1085 697.4V702.6L1082.2 701" stroke-width="1.1"/>
  <path d="M1075.5 694Q1080 690.5 1084 694M1075.5 706Q1080 709.5 1084 706" stroke-width="1"/>
  <path d="M1098.5 706.5A11.5 11.5 0 0 1 1110 695.5" stroke="#999" stroke-width="0.9"/>
  <path d="M1101.6 706.5A8.4 8.4 0 0 1 1110 698.4M1104.6 706.5A5.4 5.4 0 0 1 1110 701.3" stroke-width="1"/>
  <circle cx="1108.6" cy="705.5" r="1.1" fill="#111" stroke="none"/>
  <path d="M1119.8 696.5V706L1127 704.6M1119.8 696.5L1134.5 693V702" stroke-width="1.3"/>
  <path d="M1123.6 700.2Q1124 697.4 1127.6 697.2M1129 699.8Q1128.6 702.4 1125 702.8" stroke-width="1.1"/><path d="M1126.6 695.8L1130 696.4L1128 699Z" fill="#111" stroke="none"/><path d="M1126 704.2L1122.6 703.6L1124.6 701Z" fill="#111" stroke="none"/>
  <circle cx="1131.4" cy="704.3" r="3.4" fill="#f39200" stroke="none"/>
  <path d="M1143.3 697.5H1146.2L1150.5 693.8V706.2L1146.2 702.5H1143.3Z" stroke-width="1.2"/>
  <path d="M1152.7 697.8Q1154.5 700 1152.7 702.3M1155 695.8Q1158 700 1155 704.3" stroke-width="1.1"/>
  <path d="M1157.5 693.8Q1161.8 700 1157.5 706.3" stroke="#aaa" stroke-width="0.9"/>
  <path d="M1239 692.2H1255V704.4H1249.5L1247 707.5L1244.5 704.4H1239Z" fill="#111" stroke="none"/>
  <path d="M1242 695.8H1252M1242 698.5H1252M1242 701.2H1249" stroke="#fff" stroke-width="1"/>
 </g>
</svg>
<div class="t" style="left:88.3px;top:693.5px;font-size:14.5px;color:#333">Type here to search</div>
<svg width="24" height="24" viewBox="0 0 24 24" style="left:503px;top:687.8px"><use href="#i-chrome"/></svg>
<svg width="24" height="21" viewBox="0 0 24 21" style="left:552px;top:689px"><use href="#i-ppt"/></svg>
<svg width="20" height="23" viewBox="0 0 20 23" style="left:603px;top:688.3px"><use href="#i-vlc"/></svg>
<svg width="24" height="21" viewBox="0 0 24 21" style="left:650px;top:689px"><use href="#i-word"/></svg>
<svg width="24" height="21" viewBox="0 0 24 21" style="left:699px;top:689px"><use href="#i-excel"/></svg>
<svg width="21.3" height="18" viewBox="0 0 21.3 18" style="left:749px;top:690.9px"><use href="#i-explorer"/></svg>
<svg width="26.4" height="26.4" viewBox="0 0 24 24" preserveAspectRatio="none" style="left:795.8px;top:686.6px"><use href="#i-edge"/></svg>
<svg width="24" height="22" viewBox="0 0 24 22" style="left:845.5px;top:689px"><use href="#i-fax"/></svg>
<svg width="22.3" height="22" viewBox="0 0 24 24" preserveAspectRatio="none" style="left:895.9px;top:689px"><use href="#i-photos"/></svg>
<div class="t" style="left:1173.9px;top:685.3px;font-size:11.3px;color:#111">2:29 PM</div>
<div class="t" style="left:1169px;top:702.8px;font-size:11.65px;color:#111">6/11/2021</div>
</body></html>
